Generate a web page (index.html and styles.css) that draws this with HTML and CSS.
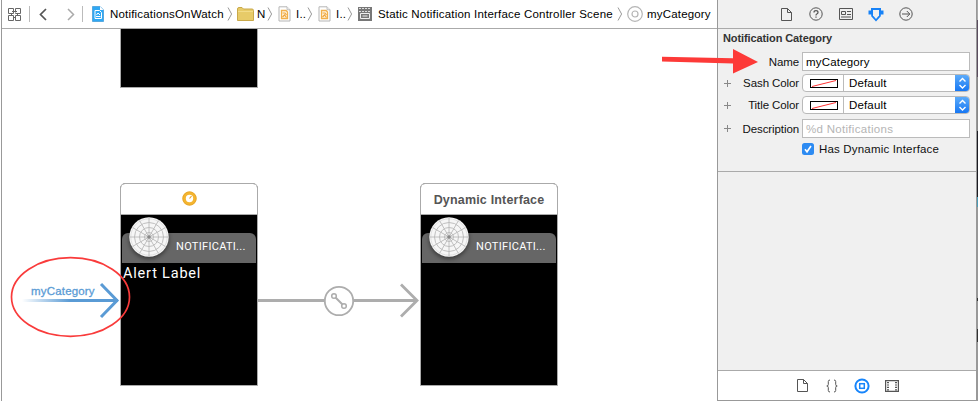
FILE: index.html
```html
<!DOCTYPE html>
<html lang="en">
<head>
<meta charset="utf-8">
<title>NotificationsOnWatch</title>
<link rel="stylesheet" href="styles.css">
</head>
<body>
<svg class="defs" width="0" height="0">
  <symbol id="chev" viewBox="0 0 6 16"><path d="M1 1.500L4.600 8L1 14.500" fill="none" stroke="#999" stroke-width="1"/></symbol>
  <symbol id="board" viewBox="0 0 13 16">
    <path d="M1 .8H9L12 3.800V15H1Z" fill="#fff" stroke="#b5b5b5"/>
    <path d="M9 .8V3.800H12" fill="#eee" stroke="#b5b5b5" stroke-width=".8"/>
    <path d="M3.500 4.500H8L9.500 6V12.500H3.500Z" fill="#fff6e4" stroke="#f2b04c" stroke-width="1.300"/>
    <path d="M4.500 7H7L8.500 9M4.500 11L6.500 9L8.500 11.500" fill="none" stroke="#f0a53a" stroke-width="1.200"/>
  </symbol>
  <symbol id="doc" viewBox="0 0 11 13"><path d="M.5 .5H6.500L10.500 4.500V12.500H.5ZM6.500 .5V4.500H10.500" fill="none" stroke="#555" stroke-width="1"/></symbol>
  <symbol id="dial" viewBox="0 0 40 40">
    <circle cx="20" cy="20" r="19.700" fill="#f6f6f6"/>
    <g fill="none" stroke="#b9b9b9" stroke-width=".9">
      <circle cx="20" cy="20" r="18.200" stroke="#dedede"/><circle cx="20" cy="20" r="14.500"/><circle cx="20" cy="20" r="9.500"/><circle cx="20" cy="20" r="4.500"/>
      <path d="M20 1V39M1 20H39M10.500 3.500L29.500 36.500M3.500 10.500L36.500 29.500M3.500 29.500L36.500 10.500M10.500 36.500L29.500 3.500"/>
    </g>
    <circle cx="20" cy="20" r="1.800" fill="#888"/>
  </symbol>
  <symbol id="swatch" viewBox="0 0 28 9"><rect x=".5" y=".5" width="27" height="8" fill="#fff" stroke="#000"/><path d="M2 7.500L26 1.500" stroke="#f33" stroke-width="1"/></symbol>
  <symbol id="step" viewBox="0 0 15 17"><path d="M4.500 7L7.500 4L10.500 7M4.500 10.500L7.500 13.500L10.500 10.500" fill="none" stroke="#fff" stroke-width="1.400"/></symbol>
</svg>
<div class="window">
  <main class="editor">
    <nav class="jumpbar">
      <svg class="related" width="13" height="13" viewBox="0 0 13 13" fill="none" stroke="#666"><path d="M.5 .5H5.500V5.500H.5ZM7.500 3V.5H12.500V5.500H7.500V4.500M.5 7.500H5.500V12.500H.5ZM7.500 7.500H12.500V12.500H7.500ZM4 3.500H9M3.500 5V8M9.500 5V8M5 9.500H8"/></svg>
      <i class="bar"></i>
      <svg class="back" width="8" height="13" viewBox="0 0 8 13"><path d="M7 1L1.500 6.500L7 12" fill="none" stroke="#555" stroke-width="1.700"/></svg>
      <svg class="forward" width="8" height="13" viewBox="0 0 8 13"><path d="M1 1L6.500 6.500L1 12" fill="none" stroke="#aaa" stroke-width="1.500"/></svg>
      <i class="bar second"></i>
      <svg class="project" width="12" height="16" viewBox="0 0 12 16"><path d="M.5 .5H8L11.500 4V15.500H.5Z" fill="#2fa8f4" stroke="#58a9df"/><path d="M8 .5V4H11.500Z" fill="#fff"/><path d="M3 4.500H7.500L9.500 6.500V12.500H3Z" fill="none" stroke="#fff"/><path d="M4 10.500H8.500M4.500 9L6 7L8 9" stroke="#fff" fill="none"/></svg>
      <span class="crumb c-project">NotificationsOnWatch</span>
      <svg class="chev"><use href="#chev"/></svg>
      <svg class="folder" width="17" height="14" viewBox="0 0 17 14"><path d="M.5 2Q.5 .5 2 .5H5L6.500 2H15Q16.500 2 16.500 3.500V13.500H.5Z" fill="#e7cb68" stroke="#c9a94a"/><path d="M1 4.500H16" stroke="#f2dc88"/></svg>
      <span class="crumb c-n">N</span>
      <svg class="chev"><use href="#chev"/></svg>
      <svg class="board"><use href="#board"/></svg>
      <span class="crumb c-i">I..</span>
      <svg class="chev"><use href="#chev"/></svg>
      <svg class="board"><use href="#board"/></svg>
      <span class="crumb c-i">I..</span>
      <svg class="chev"><use href="#chev"/></svg>
      <svg class="scene-icon" width="14" height="14" viewBox="0 0 14 14"><path d="M0 0H14V14H0Z" fill="#777"/><path d="M1 1.500H13M1 4.500H13" stroke="#ddd" stroke-dasharray="2 1"/><path d="M2.500 6.500H11.500V11.500H2.500ZM4.500 9H9.500" fill="none" stroke="#eee"/></svg>
      <span class="crumb c-scene">Static Notification Interface Controller Scene</span>
      <svg class="chev"><use href="#chev"/></svg>
      <svg class="ring" width="16" height="16" viewBox="0 0 16 16" fill="none" stroke="#b5b5b5" stroke-width="1.200"><circle cx="8" cy="8" r="7.300"/><circle cx="8" cy="8" r="3"/></svg>
      <span class="crumb c-cat">myCategory</span>
    </nav>
    <section class="canvas">
      <div class="watch previous"></div>
      <article class="watch static">
        <header><svg width="15" height="15" viewBox="0 0 15 15"><circle cx="7.500" cy="7.500" r="5.400" fill="#fff" stroke="#f4b52f" stroke-width="3.400"/><circle cx="7.500" cy="7.500" r="6.700" fill="none" stroke="#e2a12a" stroke-width=".7"/><path d="M7.500 7.500L9.500 5" stroke="#e8a22a" stroke-width="1.200"/></svg></header>
        <div class="sash"><svg class="dial"><use href="#dial"/></svg><span>NOTIFICATI...</span></div>
        <p>Alert Label</p>
      </article>
      <article class="watch dynamic">
        <header><b>Dynamic Interface</b></header>
        <div class="sash"><svg class="dial"><use href="#dial"/></svg><span>NOTIFICATI...</span></div>
      </article>
      <span class="entry">myCategory</span>
      <svg class="links" width="717" height="372" viewBox="0 29 717 372" fill="none">
        <defs><linearGradient id="fade" gradientUnits="userSpaceOnUse" x1="22" y1="0" x2="70" y2="0"><stop stop-color="#5a9bd5" stop-opacity="0"/><stop offset="1" stop-color="#5a9bd5"/></linearGradient></defs>
        <path d="M22 299H118V302H22Z" fill="url(#fade)"/>
        <path d="M101 284L117 300.500L101 317" stroke="#5a9bd5" stroke-width="3"/>
        <path d="M258 300.500H324M354 300.500H417M401 284.500L417 300.500L401 316.500" stroke="#adadad" stroke-width="2.800"/>
        <circle cx="339" cy="301" r="14.200" stroke="#adadad" stroke-width="1.800"/>
        <path d="M335.500 297.500L342.500 304.500" stroke="#adadad" stroke-width="2"/>
        <g stroke="#adadad" stroke-width="1.500"><circle cx="334" cy="296" r="2.300"/><circle cx="344" cy="306" r="2.300"/></g>
        <ellipse cx="70.500" cy="297" rx="59" ry="39.300" stroke="#f93b3b" stroke-width="1.700"/>
      </svg>
    </section>
  </main>
  <aside class="inspector">
    <div class="tabs">
      <svg width="11" height="13"><use href="#doc"/></svg>
      <svg width="14" height="14" viewBox="0 0 14 14" fill="none" stroke="#555"><circle cx="7" cy="7" r="6.200"/><path d="M5 5.500Q5 3.700 7 3.700T9 5.500Q9 6.500 7.800 7Q7 7.400 7 8.500M7 9.500V10.800" stroke-width="1.200"/></svg>
      <svg width="14" height="12" viewBox="0 0 14 12" fill="none" stroke="#555"><path d="M.5 .5H13.500V11.500H.5ZM2.500 3.500H6.500V6.500H2.500ZM8 3.500H12M8 6.500H12M2 9H12"/></svg>
      <svg width="16" height="15" viewBox="0 0 16 15"><path d="M3 1H13V3.500H15.500V7.500H12.800V9.300L8 14.500L3.200 9.300V7.500H.5V3.500H3Z" fill="#1782f7"/><path d="M5 3H11V8.600L8 11.900L5 8.600Z" fill="#f0f0f0"/></svg>
      <svg width="14" height="14" viewBox="0 0 14 14" fill="none" stroke="#555"><circle cx="7" cy="7" r="6.200"/><path d="M3 7H10.500M7.800 4L10.800 7L7.800 10"/></svg>
    </div>
    <form class="attributes">
      <h2>Notification Category</h2>
      <div class="row name"><i></i><label>Name</label><div class="field">myCategory</div></div>
      <div class="row sash-color"><i class="plus"></i><label>Sash Color</label><div class="popup"><span class="well"><svg><use href="#swatch"/></svg></span><span>Default</span><svg class="step"><use href="#step"/></svg></div></div>
      <div class="row title-color"><i class="plus"></i><label>Title Color</label><div class="popup"><span class="well"><svg><use href="#swatch"/></svg></span><span>Default</span><svg class="step"><use href="#step"/></svg></div></div>
      <div class="row description"><i class="plus"></i><label>Description</label><div class="field hint">%d Notifications</div></div>
      <div class="check"><svg width="12" height="12" viewBox="0 0 12 12"><rect width="12" height="12" rx="2.500" fill="#2d8bf2"/><path d="M3 6.300L5 8.800L9 3" fill="none" stroke="#fff" stroke-width="1.600"/></svg><span>Has Dynamic Interface</span></div>
    </form>
    <div class="library">
      <svg width="11" height="13"><use href="#doc"/></svg>
      <svg width="12" height="14" viewBox="0 0 12 14" fill="none" stroke="#555"><path d="M4 1Q2.300 1 2.300 2.500V5.500Q2.300 7 .8 7Q2.300 7 2.300 8.500V11.500Q2.300 13 4 13M8 1Q9.700 1 9.700 2.500V5.500Q9.700 7 11.200 7Q9.700 7 9.700 8.500V11.500Q9.700 13 8 13"/></svg>
      <svg width="16" height="16" viewBox="0 0 16 16" fill="none" stroke="#1785fb"><circle cx="8" cy="8" r="6.600" stroke-width="2"/><rect x="5.700" y="5.700" width="4.600" height="4.600" stroke-width="1.500"/></svg>
      <svg width="14" height="12" viewBox="0 0 14 12" fill="none" stroke="#555"><path d="M.6 .6H13.400V11.400H.6Z" stroke-width="1.200"/><path d="M3 2V11M11 2V11" stroke-width="2" stroke-dasharray="1.200 1.200"/></svg>
    </div>
  </aside>
  <div class="edge"></div>
  <svg class="pointer" width="100" height="28" viewBox="0 0 100 28"><path d="M1 9.800L72 11.300V2L97 15L72 26.500V16.500L1 14.500Z" fill="#fd3a38"/></svg>
</div>
</body>
</html>
```
FILE: styles.css
```css
* { box-sizing: border-box; }
body { margin: 0; background: #fff; font: 11.5px/14px "Liberation Sans", Arial, sans-serif; color: #111; }
svg { display: block; flex: none; }
.defs { position: absolute; }
.window { position: relative; display: flex; width: 978px; height: 401px; overflow: hidden; }
.editor { display: flex; flex-direction: column; width: 716px; margin-left: 1px; border-left: 1px solid #999; }

.jumpbar { display: flex; align-items: center; height: 29px; border-bottom: 1px solid #aaa; padding-left: 6px; white-space: nowrap; }
.bar { width: 1px; height: 16px; background: #bbb; margin-left: 8px; }
.back { margin-left: 9px; }
.forward { margin-left: 20px; }
.bar.second { margin-left: 7px; }
.project { margin-left: 9px; }
.crumb { flex: none; color: #000; letter-spacing: .18px; }
.c-project { width: 117px; margin-left: 6px; }
.chev { width: 6px; height: 16px; }
.folder { margin-left: 4px; }
.c-n { width: 10px; margin: 0 0 0 3px; }
.board { width: 13px; height: 16px; margin-left: 5px; }
.c-i { width: 11px; margin-left: 5px; }
.scene-icon { margin-left: 5px; }
.c-scene { width: 239px; margin-left: 6px; letter-spacing: .2px; }
.ring { margin-left: 4px; }
.c-cat { margin-left: 4px; }

.canvas { position: relative; flex: 1; overflow: hidden; }
.watch { position: absolute; width: 138px; border: 1px solid #aaa; background: #000; }
.previous { left: 118px; top: -10px; height: 69px; }
.static, .dynamic { top: 154px; height: 203px; border-radius: 5px 5px 0 0; }
.static { left: 118px; }
.dynamic { left: 418px; }
.watch header { display: flex; align-items: center; justify-content: center; height: 31px; border-bottom: 1px solid #aaa; border-radius: 4px 4px 0 0; background: #fff; color: #555; font-size: 12.5px; }
.watch header svg { margin-top: -2px; }
.watch header b { letter-spacing: .18px; padding-top: 2px; }
.sash { display: flex; height: 30px; margin: 18px 1px 0; border-radius: 6px 6px 0 0; background: #666; }
.dial { width: 40px; height: 40px; margin: -16px 0 0 7px; filter: drop-shadow(0 2px 2px #0007); }
.sash span { margin: 7px 0 0 7px; color: #fff; font: 11px/14px Roboto, sans-serif; letter-spacing: .3px; }
.watch p { margin: 2px 2px; color: #fff; font: 14.5px/18px Roboto, sans-serif; letter-spacing: .8px; }
.entry { position: absolute; left: 29px; top: 255px; color: #5a9bd5; letter-spacing: .18px; -webkit-text-stroke: .3px #5a9bd5; }
.links { position: absolute; left: -2px; top: 0; }

.inspector { display: flex; flex-direction: column; width: 260px; border: solid #999; border-width: 0 1px 1px; background: #f0f0f0; }
.tabs { display: grid; grid-template-columns: repeat(5, 30px); place-items: center; height: 29px; border-bottom: 1px solid #aaa; padding-left: 53px; }
.attributes { height: 143px; border-bottom: 1px solid #aaa; padding: 2px 7px 0 5px; }
h2 { margin: 0; font-size: 11px; line-height: 15px; color: #333; letter-spacing: -.1px; }
.row { display: grid; grid-template-columns: 9px 67px 168px; column-gap: 0; align-items: center; }
.row > :last-child { margin-left: 3px; width: 168px; }
.row label { text-align: right; white-space: nowrap; letter-spacing: -.1px; }
.name { margin-top: 6px; }
.sash-color { margin-top: 3px; }
.title-color { margin-top: 4px; }
.description { margin-top: 5px; }
.plus { width: 7px; height: 7px; margin-left: 1px; background: linear-gradient(#888,#888) 3px 0/1px 7px no-repeat, linear-gradient(#888,#888) 0 3px/7px 1px no-repeat; }
.field { display: flex; align-items: center; height: 19px; padding: 1px 0 0 3px; border: 1px solid #bbb; background: #fff; color: #000; letter-spacing: .18px; }
.hint { color: #b5b5b5; letter-spacing: .3px; }
.popup { display: flex; align-items: center; height: 18px; border: 1px solid #b9b9b9; border-radius: 4px; background: #fff; overflow: hidden; color: #000; letter-spacing: .15px; }
.well { width: 41px; height: 16px; border-right: 1px solid #bbb; padding: 4px 0 0 7px; margin-right: 5px; }
.well svg { width: 28px; height: 9px; }
.step { width: 15px; height: 18px; margin: -1px -1px -1px auto; background: linear-gradient(#60aefa, #1274f3); }
.check { display: flex; align-items: center; gap: 5px; margin: 4px 0 0 79px; letter-spacing: .18px; }
.library { display: grid; grid-template-columns: repeat(4, 30px); place-items: center; height: 30px; margin-top: auto; border-top: 1px solid #aaa; background: #fff; padding-left: 69px; }
.edge { width: 1px; background: linear-gradient(#aaa 20px, #5a4c5e 20px 77px, #888 77px 131px, #1c1c22 131px 197px, #4b9bb5 197px 207px, #999 207px 298px, #333 298px 301px, #999 301px 329px, #333 329px 342px, #999 342px); }
.pointer { position: absolute; left: 661px; top: 47px; }
```
